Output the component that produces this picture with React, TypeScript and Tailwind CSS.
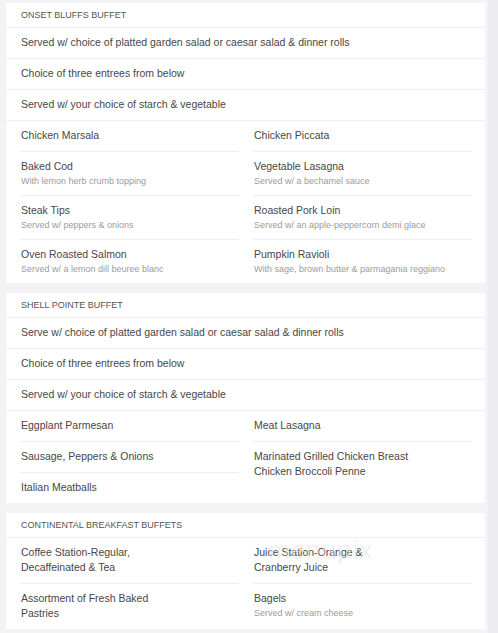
import React from "react";

type Item = { title: string[]; sub?: string };

const Row = ({ text }: { text: string }) => (
  <div className="h-[31px] flex items-center px-[15px] border-b border-[#efeff1] text-[10.5px] text-[#474747]">
    {text}
  </div>
);

const Header = ({ text }: { text: string }) => (
  <div className="h-[25px] flex items-center pt-[1px] px-[15px] border-b border-[#efeff1] text-[9px] text-[#555555] uppercase">
    {text}
  </div>
);

const Col = ({ items }: { items: Item[] }) => (
  <div className="flex flex-col">
    {items.map((it, i) => (
      <div
        key={i}
        className={
          "pl-[1px] pt-[7px] " +
          (it.sub ? "pb-[6px] " : it.title.length > 1 ? "pb-[8px] " : "pb-[7px] ") +
          (i < items.length - 1 ? "min-h-[31px] border-b border-[#efeff1]" : "min-h-[30px]")
        }
      >
        {it.title.map((t, j) => (
          <div key={j} className="text-[10.5px] leading-[15px] text-[#474747]">
            {t}
          </div>
        ))}
        {it.sub && (
          <div className="text-[9px] leading-[15px] text-[#9c9c9c]">{it.sub}</div>
        )}
      </div>
    ))}
  </div>
);

const Grid = ({ left, right }: { left: Item[]; right: Item[] }) => (
  <div className="grid grid-cols-2 gap-x-[14px] pl-[14px] pr-[13px]">
    <Col items={left} />
    <Col items={right} />
  </div>
);

export default function App() {
  return (
    <div className="bg-[#ececf1] min-h-[633px] w-[498px] overflow-hidden font-['Liberation_Sans',Arial,sans-serif]">
      <div className="relative w-[488px] bg-[#f3f3f5] pl-[6px] pr-[3px] pt-[3px] flex flex-col gap-[10px] min-h-[633px]">
        <div className="bg-white">
          <Header text="Onset Bluffs Buffet" />
          <Row text="Served w/ choice of platted garden salad or caesar salad & dinner rolls" />
          <Row text="Choice of three entrees from below" />
          <Row text="Served w/ your choice of starch & vegetable" />
          <Grid
            left={[
              { title: ["Chicken Marsala"] },
              { title: ["Baked Cod"], sub: "With lemon herb crumb topping" },
              { title: ["Steak Tips"], sub: "Served w/ peppers & onions" },
              { title: ["Oven Roasted Salmon"], sub: "Served w/ a lemon dill beuree blanc" },
            ]}
            right={[
              { title: ["Chicken Piccata"] },
              { title: ["Vegetable Lasagna"], sub: "Served w/ a bechamel sauce" },
              { title: ["Roasted Pork Loin"], sub: "Served w/ an apple-peppercorn demi glace" },
              { title: ["Pumpkin Ravioli"], sub: "With sage, brown butter & parmagania reggiano" },
            ]}
          />
        </div>
        <div className="bg-white">
          <Header text="Shell Pointe Buffet" />
          <Row text="Serve w/ choice of platted garden salad or caesar salad & dinner rolls" />
          <Row text="Choice of three entrees from below" />
          <Row text="Served w/ your choice of starch & vegetable" />
          <Grid
            left={[
              { title: ["Eggplant Parmesan"] },
              { title: ["Sausage, Peppers & Onions"] },
              { title: ["Italian Meatballs"] },
            ]}
            right={[
              { title: ["Meat Lasagna"] },
              { title: ["Marinated Grilled Chicken Breast", "Chicken Broccoli Penne"] },
            ]}
          />
        </div>
        <div className="bg-white">
          <Header text="Continental Breakfast Buffets" />
          <Grid
            left={[
              { title: ["Coffee Station-Regular,", "Decaffeinated & Tea"] },
              { title: ["Assortment of Fresh Baked", "Pastries"] },
            ]}
            right={[
              { title: ["Juice Station-Orange &", "Cranberry Juice"] },
              { title: ["Bagels"], sub: "Served w/ cream cheese" },
            ]}
          />
        </div>
        <div className="absolute left-[268px] top-[536px] text-[26px] leading-[28px] text-[#e4e4e4] opacity-50 pointer-events-none tracking-[1px]">
          menupix
        </div>
      </div>
    </div>
  );
}
